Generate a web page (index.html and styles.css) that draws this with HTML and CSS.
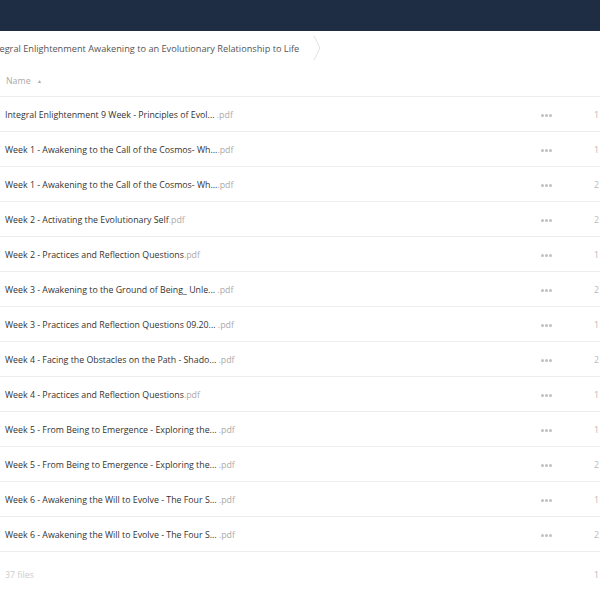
FILE: index.html
```html
<!DOCTYPE html>
<html lang="en">
<head>
    <meta charset="UTF-8">
    <title>Files</title>
    <link rel="stylesheet" href="styles.css">
</head>
<body>
    <div class="header"></div>

    <div class="breadcrumb">
        <span class="crumb">Integral Enlightenment Awakening to an Evolutionary Relationship to Life</span>
        <svg class="chevron" width="8" height="26" viewBox="0 0 8 26">
            <path d="M1 1 L7 13 L1 25" fill="none" stroke="#e2e2e2" stroke-width="1"/>
        </svg>
    </div>

    <div class="file-list">
        <div class="list-head">
            <span class="sort">Name <span class="arrow">&#9650;</span></span>
        </div>

        <div class="row"><span class="name">Integral Enlightenment 9 Week - Principles of Evol... <span class="ext">.pdf</span></span><span class="more"><i></i><i></i><i></i></span><span class="size">1 MB</span></div>
        <div class="row"><span class="name">Week 1 - Awakening to the Call of the Cosmos- Wh...<span class="ext">.pdf</span></span><span class="more"><i></i><i></i><i></i></span><span class="size">1 MB</span></div>
        <div class="row"><span class="name">Week 1 - Awakening to the Call of the Cosmos- Wh...<span class="ext">.pdf</span></span><span class="more"><i></i><i></i><i></i></span><span class="size">2 MB</span></div>
        <div class="row"><span class="name">Week 2 - Activating the Evolutionary Self<span class="ext">.pdf</span></span><span class="more"><i></i><i></i><i></i></span><span class="size">2 MB</span></div>
        <div class="row"><span class="name">Week 2 - Practices and Reflection Questions<span class="ext">.pdf</span></span><span class="more"><i></i><i></i><i></i></span><span class="size">1 MB</span></div>
        <div class="row"><span class="name">Week 3 - Awakening to the Ground of Being_ Unle... <span class="ext">.pdf</span></span><span class="more"><i></i><i></i><i></i></span><span class="size">2 MB</span></div>
        <div class="row"><span class="name">Week 3 - Practices and Reflection Questions 09.20... <span class="ext">.pdf</span></span><span class="more"><i></i><i></i><i></i></span><span class="size">1 MB</span></div>
        <div class="row"><span class="name">Week 4 - Facing the Obstacles on the Path - Shado... <span class="ext">.pdf</span></span><span class="more"><i></i><i></i><i></i></span><span class="size">2 MB</span></div>
        <div class="row"><span class="name">Week 4 - Practices and Reflection Questions<span class="ext">.pdf</span></span><span class="more"><i></i><i></i><i></i></span><span class="size">1 MB</span></div>
        <div class="row"><span class="name">Week 5 - From Being to Emergence - Exploring the... <span class="ext">.pdf</span></span><span class="more"><i></i><i></i><i></i></span><span class="size">1 MB</span></div>
        <div class="row"><span class="name">Week 5 - From Being to Emergence - Exploring the... <span class="ext">.pdf</span></span><span class="more"><i></i><i></i><i></i></span><span class="size">2 MB</span></div>
        <div class="row"><span class="name">Week 6 - Awakening the Will to Evolve - The Four S... <span class="ext">.pdf</span></span><span class="more"><i></i><i></i><i></i></span><span class="size">1 MB</span></div>
        <div class="row"><span class="name">Week 6 - Awakening the Will to Evolve - The Four S... <span class="ext">.pdf</span></span><span class="more"><i></i><i></i><i></i></span><span class="size">2 MB</span></div>

        <div class="list-foot">
            <span class="count">37 files</span>
            <span class="size">1 GB</span>
        </div>
    </div>
</body>
</html>
```

FILE: styles.css
```css
* {
    margin: 0;
    padding: 0;
    box-sizing: border-box;
}

body {
    font-family: "Open Sans", "Liberation Sans", sans-serif;
    font-size: 8.8px;
    color: #222;
    background: #fff;
    width: 600px;
    overflow: hidden;
}

.header {
    height: 31px;
    background: #1e2c44;
}

.breadcrumb {
    display: flex;
    align-items: center;
    height: 34px;
    margin-left: -12px;
    white-space: nowrap;
}

.crumb {
    color: #555;
    font-size: 9.2px;
}

.chevron {
    margin-left: 14px;
}

.list-head {
    height: 32px;
    display: flex;
    align-items: center;
    padding-left: 6px;
    border-bottom: 1px solid #ededed;
}

.sort {
    color: #aaa;
}

.arrow {
    font-size: 5px;
    margin-left: 4px;
    vertical-align: 1px;
}

.row {
    display: flex;
    align-items: center;
    height: 35px;
    padding-top: 1px;
    border-bottom: 1px solid #ededed;
    white-space: nowrap;
}

.name {
    flex: 1;
    padding-left: 5px;
    color: #333;
}

.ext {
    color: #aaa;
}

.more {
    display: flex;
    gap: 1px;
    width: 53px;
    padding-top: 1px;
}

.more i {
    width: 3px;
    height: 3px;
    border-radius: 50%;
    background: #c0c0c0;
}

.size {
    width: 6px;
    overflow: hidden;
    color: #bbb;
}

.list-foot {
    display: flex;
    align-items: center;
    height: 46px;
    white-space: nowrap;
}

.count {
    flex: 1;
    padding-left: 5px;
    color: #ccc;
}
```
